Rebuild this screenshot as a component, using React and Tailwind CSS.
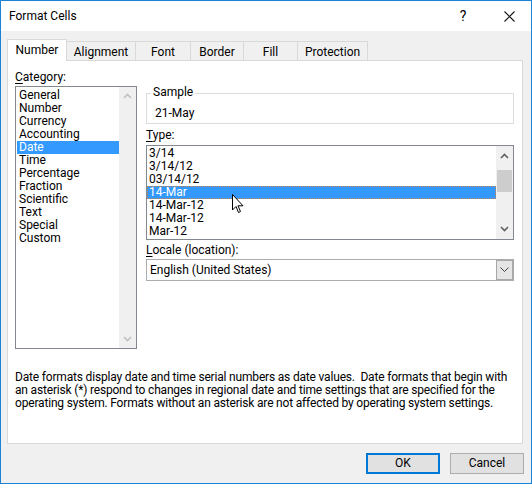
import React from "react";

const categories = [
  "General",
  "Number",
  "Currency",
  "Accounting",
  "Date",
  "Time",
  "Percentage",
  "Fraction",
  "Scientific",
  "Text",
  "Special",
  "Custom",
];

const types = ["3/14", "3/14/12", "03/14/12", "14-Mar", "14-Mar-12", "14-Mar-12", "Mar-12"];

const tabs = [
  { label: "Number", w: "w-[60px]" },
  { label: "Alignment", w: "w-[69px]" },
  { label: "Font", w: "w-[55px]" },
  { label: "Border", w: "w-[53px]" },
  { label: "Fill", w: "w-[54px]" },
  { label: "Protection", w: "w-[70px]" },
];

const Chevron = ({ down, color = "#606060" }) => (
  <svg width="9" height="6" viewBox="0 0 9 6">
    <path
      d={down ? "M1 1 L4.5 4.5 L8 1" : "M1 5 L4.5 1.5 L8 5"}
      fill="none"
      stroke={color}
      strokeWidth="1.6"
    />
  </svg>
);

const Accel = ({ first, rest }) => (
  <span>
    <span className="underline underline-offset-2">{first}</span>
    {rest}
  </span>
);

const App = () => {
  return (
    <div
      className="w-[532px] h-[484px] border border-[#1883d7] bg-[#f0f0f0] flex flex-col text-[12px] text-black leading-[13px]"
      style={{ fontFamily: '"Segoe UI", Roboto, sans-serif' }}
    >
      {/* title bar */}
      <div className="h-[30px] bg-white flex items-center pl-2 shrink-0">
        <span className="text-[12px]">Format Cells</span>
        <span className="ml-auto w-[20px] text-center text-[14px]">?</span>
        <div className="ml-[30px] mr-[16px] w-[12px] h-[12px] flex items-center justify-center">
          <svg width="11" height="11" viewBox="0 0 11 11">
            <path d="M0.5 0.5 L10.5 10.5 M10.5 0.5 L0.5 10.5" stroke="#111" strokeWidth="1.1" />
          </svg>
        </div>
      </div>

      {/* tabs */}
      <div className="flex items-end pl-[6px] pt-[7px] h-[29px] shrink-0">
        {tabs.map((t, i) =>
          i === 0 ? (
            <div
              key={t.label}
              className={`${t.w} h-[22px] bg-white border border-b-0 border-[#d9d9d9] flex items-center justify-center relative z-10 -mb-px`}
            >
              {t.label}
            </div>
          ) : (
            <div
              key={t.label}
              className={`${t.w} h-[19px] bg-[#f0f0f0] border border-b-0 border-l-0 border-[#d9d9d9] flex items-center justify-center pt-[2px]`}
            >
              {t.label}
            </div>
          )
        )}
      </div>

      {/* panel */}
      <div className="ml-[6px] w-[516px] h-[384px] bg-white border border-[#d9d9d9] shrink-0 flex flex-col px-[7px]">
        <div className="flex">
          {/* category column */}
          <div className="w-[122px] flex flex-col">
            <div className="mt-[10px] h-[13px]">
              <Accel first="C" rest="ategory:" />
            </div>
            <div className="mt-[2px] h-[263px] border border-[#828790] flex">
              <div className="flex-1 pt-[2px] pl-[1px]">
                {categories.map((c) =>
                  c === "Date" ? (
                    <div key={c} className="h-[13px] bg-[#3399ff] text-white pl-[2px] flex items-center">
                      {c}
                    </div>
                  ) : (
                    <div key={c} className="h-[13px] pl-[2px] flex items-center">
                      {c}
                    </div>
                  )
                )}
              </div>
              <div className="w-[17px] bg-[#f0f0f0] flex flex-col items-center justify-between py-[6px]">
                <Chevron color="#c0c0c0" />
                <Chevron down color="#c0c0c0" />
              </div>
            </div>
          </div>

          {/* right column */}
          <div className="ml-[9px] w-[368px] flex flex-col">
            <div className="mt-[32px] h-[31px] border border-[#dcdcdc] relative">
              <span className="absolute -top-[8px] left-[4px] bg-white px-[2px]">Sample</span>
              <div className="pl-[8px] pt-[13px]">21-May</div>
            </div>
            <div className="mt-[5px] h-[13px]">
              <Accel first="T" rest="ype:" />
            </div>
            <div className="mt-[3px] h-[95px] border border-[#828790] flex">
              <div className="flex-1 pt-[1px]">
                {types.map((t, i) =>
                  i === 3 ? (
                    <div
                      key={i}
                      className="h-[13px] bg-[#3399ff] text-white pl-[2px] flex items-center border border-dotted border-[#c9824a] relative"
                    >
                      <span className="-ml-px">{t}</span>
                      <svg
                        className="absolute left-[84px] top-[7px]"
                        width="13"
                        height="20"
                        viewBox="0 0 13 20"
                      >
                        <path
                          d="M0.5 0.5 L0.5 16 L4 12.5 L6.5 18.5 L8.5 17.5 L6 11.8 L11 11.8 Z"
                          fill="white"
                          stroke="black"
                          strokeWidth="1"
                          strokeLinejoin="miter"
                        />
                      </svg>
                    </div>
                  ) : (
                    <div key={i} className="h-[13px] pl-[2px] flex items-center">
                      {t}
                    </div>
                  )
                )}
              </div>
              <div className="w-[17px] bg-[#f0f0f0] flex flex-col items-center py-[7px]">
                <Chevron />
                <div className="mt-[11px] w-[15px] h-[22px] bg-[#cdcdcd]" />
                <div className="mt-auto">
                  <Chevron down />
                </div>
              </div>
            </div>
            <div className="mt-[4px] h-[13px]">
              <Accel first="L" rest="ocale (location):" />
            </div>
            <div className="mt-[2px] h-[22px] border border-[#acacac] flex items-center">
              <span className="pl-[3px] flex-1">English (United States)</span>
              <div className="w-[17px] h-[20px] bg-[#e5e5e5] border border-[#a8a8a8] flex items-center justify-center">
                <svg width="9" height="6" viewBox="0 0 9 6">
                  <path d="M0.5 0.5 L4.5 4.5 L8.5 0.5" fill="none" stroke="#404040" strokeWidth="1" />
                </svg>
              </div>
            </div>
          </div>
        </div>

        <div className="mt-[22px] leading-[13px] whitespace-nowrap tracking-[-0.18px]">
          Date formats display date and time serial numbers as date values.&nbsp; Date formats that begin with
          <br />
          an asterisk (*) respond to changes in regional date and time settings that are specified for the
          <br />
          operating system. Formats without an asterisk are not affected by operating system settings.
        </div>
      </div>

      {/* buttons */}
      <div className="flex justify-end gap-[10px] pr-[7px] mt-[9px]">
        <button className="w-[74px] h-[21px] bg-[#e1e1e1] border-2 border-[#0078d7] flex items-center justify-center">
          OK
        </button>
        <button className="w-[74px] h-[21px] bg-[#e1e1e1] border border-[#adadad] flex items-center justify-center">
          Cancel
        </button>
      </div>
    </div>
  );
};

export default App;
